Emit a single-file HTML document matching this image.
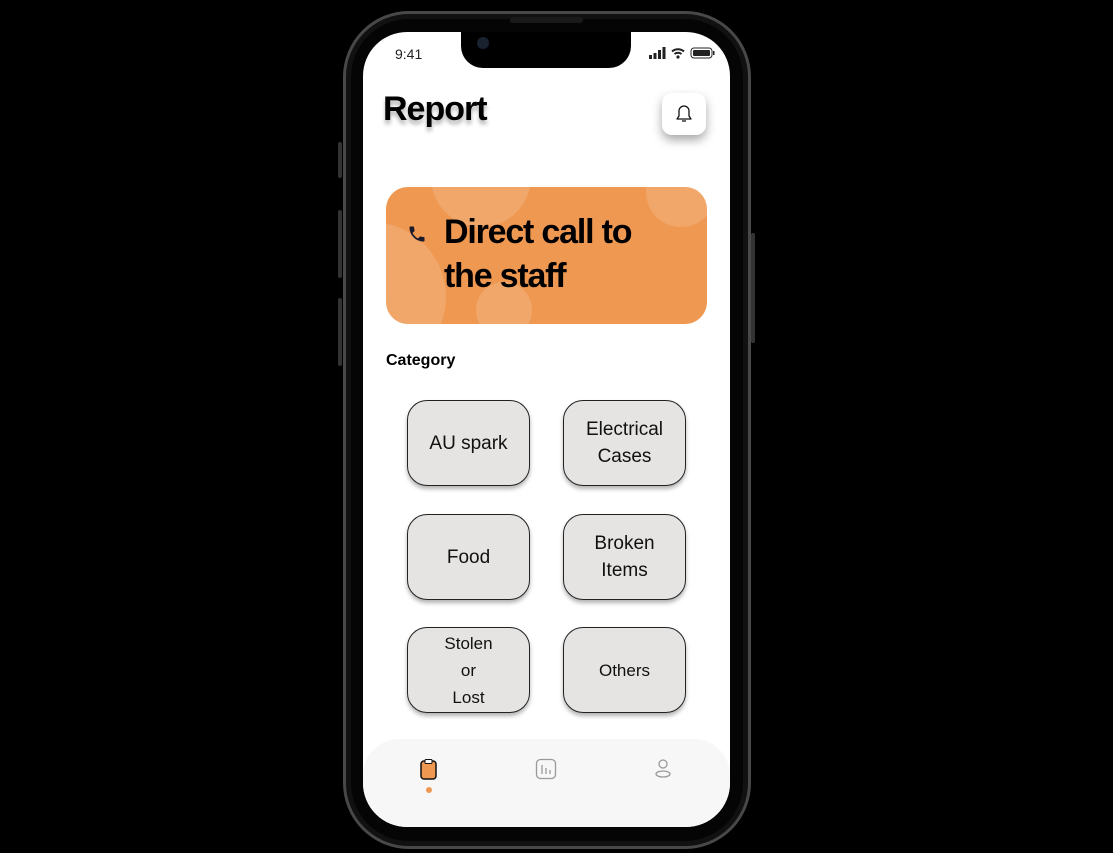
<!DOCTYPE html>
<html><head><style>
*{margin:0;padding:0;box-sizing:border-box}
body{width:1113px;height:853px;background:#000;position:relative;overflow:hidden;font-family:"Liberation Sans",sans-serif}
.phone{position:absolute;left:343px;top:11px;width:408px;height:838px;border-radius:66px;border:3px solid #48484a;background:#050505;box-shadow:inset 0 0 0 5px #111}
.btn{position:absolute;width:4px;background:#333;border-radius:2px}
.screen{position:absolute;left:363px;top:32px;width:367px;height:795px;border-radius:44px;background:#fff;overflow:hidden}
.notch{position:absolute;left:98px;top:0;width:170px;height:36px;background:#000;border-radius:0 0 22px 22px}
.time{position:absolute;left:32px;top:14px;font-size:14px;color:#222}
.title{position:absolute;left:20px;top:58px;font-size:34px;font-weight:bold;letter-spacing:-1px;text-shadow:0 4px 4px rgba(0,0,0,.3)}
.bell{position:absolute;left:299px;top:61px;width:44px;height:42px;border-radius:10px;background:#fff;box-shadow:0 5px 10px rgba(0,0,0,.35)}
.card{position:absolute;left:23px;top:155px;width:321px;height:137px;border-radius:22px;background:#ef9851;overflow:hidden}
.c{position:absolute;border-radius:50%;background:rgba(255,255,255,.15)}
.ct{position:absolute;left:58px;top:23px;font-size:34px;font-weight:bold;line-height:44px;letter-spacing:-1.2px;color:#000}
.cat{position:absolute;left:23px;top:320px;font-size:16px;font-weight:bold}
.b{position:absolute;width:123px;height:86px;border-radius:20px;background:#e5e4e2;border:1px solid #222;box-shadow:0 3px 4px rgba(0,0,0,.3);display:flex;align-items:center;justify-content:center;text-align:center;font-size:19px;line-height:27px;color:#111}
.nav{position:absolute;left:0;top:707px;width:367px;height:90px;background:#f7f7f7;border-radius:36px 36px 0 0}
</style></head><body>
<div class="btn" style="left:338px;top:142px;height:36px"></div>
<div class="btn" style="left:338px;top:210px;height:68px"></div>
<div class="btn" style="left:338px;top:298px;height:68px"></div>
<div class="btn" style="left:751px;top:233px;height:110px"></div>
<div class="phone"></div>
<div style="position:absolute;left:510px;top:17px;width:73px;height:6px;border-radius:3px;background:#1a1a1a"></div>
<div class="screen">
<div class="notch"><div style="position:absolute;left:16px;top:5px;width:12px;height:12px;border-radius:50%;background:#1a2230"></div></div>
<div class="time">9:41</div>
<svg style="position:absolute;left:286px;top:15px" width="68" height="13"><rect x="0" y="8" width="3" height="4" fill="#222"/><rect x="4.5" y="6" width="3" height="6" fill="#222"/><rect x="9" y="3" width="3" height="9" fill="#222"/><rect x="13.5" y="0" width="3" height="12" fill="#222"/><path d="M23 4.5a9 9 0 0 1 12 0M25.5 7a5.5 5.5 0 0 1 7 0" stroke="#222" stroke-width="2" fill="none"/><circle cx="29" cy="10" r="1.6" fill="#222"/><rect x="42" y="1" width="21" height="10" rx="3" fill="none" stroke="#222"/><rect x="44" y="3" width="17" height="6" rx="1" fill="#222"/><rect x="64" y="4" width="1.5" height="4" fill="#222"/></svg>
<div class="title">Report</div>
<div class="bell"><svg width="44" height="42" viewBox="0 0 44 42"><path d="M15 26h14l-2-3v-5a5 5 0 0 0-10 0v5z" fill="none" stroke="#111" stroke-width="1.3" stroke-linejoin="round"/><path d="M20 28h4" stroke="#111" stroke-width="1.3"/></svg></div>
<div class="card">
<div class="c" style="left:45px;top:-60px;width:100px;height:100px"></div>
<div class="c" style="left:-90px;top:35px;width:150px;height:150px"></div>
<div class="c" style="left:90px;top:95px;width:56px;height:56px"></div>
<div class="c" style="left:260px;top:-30px;width:70px;height:70px"></div>
<svg style="position:absolute;left:21px;top:37px" width="20" height="20" viewBox="0 0 24 24"><path d="M6.6 10.8c1.4 2.8 3.8 5.1 6.6 6.6l2.2-2.2c.3-.3.7-.4 1-.2 1.1.4 2.3.6 3.6.6.6 0 1 .4 1 1V20c0 .6-.4 1-1 1C10.6 21 3 13.4 3 4c0-.6.4-1 1-1h3.5c.6 0 1 .4 1 1 0 1.3.2 2.5.6 3.6.1.3 0 .7-.2 1z" fill="#1a1a2a"/></svg>
<div class="ct">Direct call to<br>the staff</div>
</div>
<div class="cat">Category</div>
<div class="b" style="left:44px;top:368px">AU spark</div>
<div class="b" style="left:200px;top:368px">Electrical<br>Cases</div>
<div class="b" style="left:44px;top:482px">Food</div>
<div class="b" style="left:200px;top:482px">Broken<br>Items</div>
<div class="b" style="left:44px;top:595px;font-size:17px">Stolen<br>or<br>Lost</div>
<div class="b" style="left:200px;top:595px;font-size:17px">Others</div>
<div class="nav">
<svg style="position:absolute;left:56px;top:19px" width="20" height="24"><rect x="2" y="3" width="15" height="18" rx="3" fill="#ef9851" stroke="#111" stroke-width="1.5"/><rect x="6" y="1.5" width="7" height="4" rx="1" fill="#fff" stroke="#111"/></svg>
<div style="position:absolute;left:63px;top:48px;width:6px;height:6px;border-radius:50%;background:#ef9851"></div>
<svg style="position:absolute;left:172px;top:19px" width="22" height="22"><rect x="1.5" y="1.5" width="19" height="19" rx="4" fill="none" stroke="#999" stroke-width="1.3"/><path d="M7 7v9M11 10v6M15 12v4" stroke="#999" stroke-width="1.3"/></svg>
<svg style="position:absolute;left:290px;top:19px" width="20" height="22"><circle cx="10" cy="6" r="4" fill="none" stroke="#999" stroke-width="1.3"/><ellipse cx="10" cy="16" rx="7" ry="3" fill="none" stroke="#999" stroke-width="1.3"/></svg>
</div>
</div>
</body></html>
